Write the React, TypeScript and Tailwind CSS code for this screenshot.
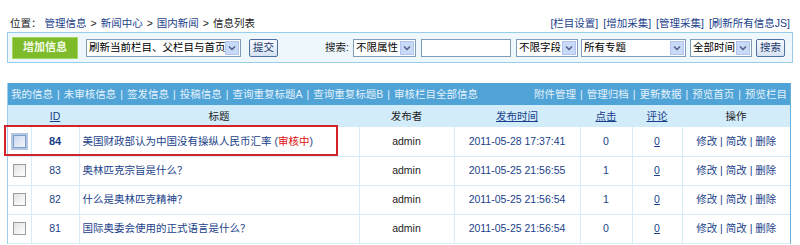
import React from "react";

const font = { fontFamily: '"Liberation Sans", "Noto Sans CJK SC", sans-serif' };

function Sel({ w, text }: { w: string; text: string }) {
  return (
    <div className={`flex items-center h-[18px] border border-[#7f9db9] bg-white ${w}`}>
      <span className="flex-1 pl-[2px] text-[10.5px] leading-none text-black whitespace-nowrap overflow-hidden">{text}</span>
      <span className="w-[14px] h-[14px] mr-[1px] bg-[#c9daf8] border border-[#b0c4ef] flex items-center justify-center shrink-0">
        <svg width="8" height="6" viewBox="0 0 8 6"><path d="M1 1.5 L4 4.5 L7 1.5" fill="none" stroke="#4d6185" strokeWidth="1.5" /></svg>
      </span>
    </div>
  );
}

function Btn({ text, w }: { text: string; w: string }) {
  return (
    <div className={`h-[18px] ${w} flex items-center justify-center border border-[#4f6f9f] rounded-[2px] bg-gradient-to-b from-[#f7faff] to-[#d6e2f2] text-[10.5px] text-[#1d3a6b] leading-none`}>{text}</div>
  );
}

function Sep() {
  return <span className="mx-[4px]">|</span>;
}

function Links({ items }: { items: string[] }) {
  return (
    <div className="whitespace-nowrap">
      {items.map((t, i) => (
        <React.Fragment key={t}>
          {i > 0 && <Sep />}
          {t}
        </React.Fragment>
      ))}
    </div>
  );
}

const rows = [
  { id: "84", title: "美国财政部认为中国没有操纵人民币汇率", tag: true, time: "2011-05-28 17:37:41", click: "0" },
  { id: "83", title: "奥林匹克宗旨是什么？", tag: false, time: "2011-05-25 21:56:55", click: "1" },
  { id: "82", title: "什么是奥林匹克精神？", tag: false, time: "2011-05-25 21:56:54", click: "1" },
  { id: "81", title: "国际奥委会使用的正式语言是什么？", tag: false, time: "2011-05-25 21:56:54", click: "0" },
];

const cell = "border-r border-[#d6ecf7] text-center";

export default function App() {
  return (
    <div className="relative w-[800px] h-[245px] bg-white overflow-hidden text-[10.5px] text-[#222]" style={font}>
      <div className="flex justify-between items-center h-[32px] pt-[14px] pl-[10px] pr-[10px] leading-none">
        <div className="text-[#222] whitespace-nowrap">
          位置：<span className="ml-[3px] text-[#1a3f8a]">管理信息</span>
          <span className="mx-[4px]">&gt;</span>
          <span className="text-[#1a3f8a]">新闻中心</span>
          <span className="mx-[4px]">&gt;</span>
          <span className="text-[#1a3f8a]">国内新闻</span>
          <span className="mx-[4px]">&gt;</span>
          信息列表
        </div>
        <div className="text-[#1a3f8a] whitespace-nowrap flex gap-[5px]">
          <span>[栏目设置]</span>
          <span>[增加采集]</span>
          <span>[管理采集]</span>
          <span>[刷新所有信息JS]</span>
        </div>
      </div>
      <div className="ml-[7px] w-[786px] h-[31px] border border-[#96cde9] bg-[#edf7fc] flex items-center pl-[4px]">
        <div className="w-[66px] h-[22px] bg-[#7dbb2b] border border-[#a5d467] flex items-center justify-center text-[#f4fbe8] font-bold text-[11px] leading-none">增加信息</div>
        <div className="ml-[8px]"><Sel w="w-[155px]" text="刷新当前栏目、父栏目与首页" /></div>
        <div className="ml-[8px]"><Btn w="w-[29px]" text="提交" /></div>
        <div className="ml-[47px] text-[#222] leading-none">搜索:</div>
        <div className="ml-[4px]"><Sel w="w-[63px]" text="不限属性" /></div>
        <div className="ml-[5px] w-[90px] h-[18px] border border-[#7f9db9] bg-white" />
        <div className="ml-[5px]"><Sel w="w-[62px]" text="不限字段" /></div>
        <div className="ml-[3px]"><Sel w="w-[105px]" text="所有专题" /></div>
        <div className="ml-[4px]"><Sel w="w-[62px]" text="全部时间" /></div>
        <div className="ml-[4px]"><Btn w="w-[29px]" text="搜索" /></div>
      </div>
      <div className="ml-[7px] w-[784px] mt-[20px] border-l border-[#9fd1ec] border-r border-r-[#6db2dc]">
        <div className="h-[22px] bg-[#4fa3d6] flex items-center justify-between pl-[3px] pr-[3px] text-[#e4f2fc] leading-none">
          <Links items={["我的信息", "未审核信息", "签发信息", "投稿信息", "查询重复标题A", "查询重复标题B", "审核栏目全部信息"]} />
          <Links items={["附件管理", "管理归档", "更新数据", "预览首页", "预览栏目"]} />
        </div>
        <table className="w-full border-collapse table-fixed">
          <colgroup>
            <col className="w-[23px]" />
            <col className="w-[48px]" />
            <col className="w-[280px]" />
            <col className="w-[95px]" />
            <col className="w-[126px]" />
            <col className="w-[52px]" />
            <col className="w-[50px]" />
            <col />
          </colgroup>
          <thead>
            <tr className="h-[22px] bg-[#d3ecfa] text-[#222] leading-none">
              <th className="font-normal" />
              <th className="font-normal"><span className="underline text-[#1a3f8a]">ID</span></th>
              <th className="font-normal">标题</th>
              <th className="font-normal">发布者</th>
              <th className="font-normal"><span className="underline text-[#1a3f8a]">发布时间</span></th>
              <th className="font-normal"><span className="underline text-[#1a3f8a]">点击</span></th>
              <th className="font-normal"><span className="underline text-[#1a3f8a]">评论</span></th>
              <th className="font-normal">操作</th>
            </tr>
          </thead>
          <tbody>
            {rows.map((r, i) => (
              <tr key={r.id} className="h-[29px] border-b border-[#d6ecf7] leading-none">
                <td className={cell}>
                  <span className={`inline-block align-middle w-[13px] h-[13px] border ${i === 0 ? "border-[#7f9fcb] bg-gradient-to-br from-[#c9d7ee] to-[#f3f6fb] outline outline-2 outline-[#b3c7e3]" : "border-[#9c9c9c] bg-gradient-to-br from-[#e2e2e2] to-[#ffffff]"}`} />
                </td>
                <td className={`${cell} text-[#1a3f8a] ${i === 0 ? "font-bold text-[11px]" : ""}`}>{r.id}</td>
                <td className="border-r border-[#d6ecf7] pl-[3px] text-[#1a3f8a] whitespace-nowrap">
                  {r.title}
                  {r.tag && (
                    <span>
                      {" "}(<span className="text-[#e01010]">审核中</span>)
                    </span>
                  )}
                </td>
                <td className={`${cell} text-[#222]`}>admin</td>
                <td className={`${cell} text-[#1a3f8a]`}>{r.time}</td>
                <td className={`${cell} text-[#1a3f8a]`}>{r.click}</td>
                <td className={cell}><span className="underline text-[#1a3f8a]">0</span></td>
                <td className="text-center text-[#1a3f8a] whitespace-nowrap">修改 | 简改 | 删除</td>
              </tr>
            ))}
          </tbody>
        </table>
      </div>
      <div className="absolute left-[4px] top-[125px] w-[334px] h-[31px] border-2 border-[#d3222a] pointer-events-none" />
    </div>
  );
}
